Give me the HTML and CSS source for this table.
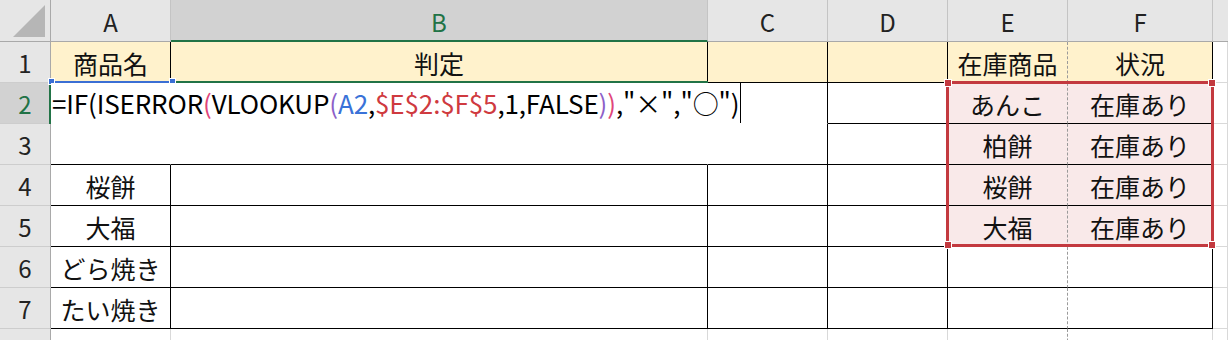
FILE: index.html
```html
<!DOCTYPE html>
<html lang="ja">
<head>
<meta charset="utf-8">
<link rel="stylesheet" href="styles.css">
</head>
<body>
<div class="sheet">
  <div class="grid">
    <div class="corner"><svg width="50" height="41" viewBox="0 0 50 41"><polygon points="45,5 45,37 13,37" fill="#b6b6b6"/></svg></div>
    <div class="ch">A</div>
    <div class="ch ch-sel">B</div>
    <div class="ch">C</div>
    <div class="ch">D</div>
    <div class="ch">E</div>
    <div class="ch">F</div>
    <div class="ch ch-last"></div>

    <div class="rh">1</div>
    <div class="c yel br">商品名</div>
    <div class="c yel br">判定</div>
    <div class="c yel br bb"></div>
    <div class="c yel br bb"></div>
    <div class="c yel dr bb">在庫商品</div>
    <div class="c yel br bb">状況</div>
    <div class="c"></div>

    <div class="rh rh-sel">2</div>
    <div class="c"></div>
    <div class="c"></div>
    <div class="c br"></div>
    <div class="c br bb"></div>
    <div class="c pink dr bb">あんこ</div>
    <div class="c pink br bb">在庫あり</div>
    <div class="c"></div>

    <div class="rh">3</div>
    <div class="c bb"></div>
    <div class="c bb"></div>
    <div class="c br bb"></div>
    <div class="c br bb"></div>
    <div class="c pink dr bb">柏餅</div>
    <div class="c pink br bb">在庫あり</div>
    <div class="c"></div>

    <div class="rh">4</div>
    <div class="c br bb">桜餅</div>
    <div class="c br bb"></div>
    <div class="c br bb"></div>
    <div class="c br bb"></div>
    <div class="c pink dr bb">桜餅</div>
    <div class="c pink br bb">在庫あり</div>
    <div class="c"></div>

    <div class="rh">5</div>
    <div class="c br bb">大福</div>
    <div class="c br bb"></div>
    <div class="c br bb"></div>
    <div class="c br bb"></div>
    <div class="c pink dr bb">大福</div>
    <div class="c pink br bb">在庫あり</div>
    <div class="c"></div>

    <div class="rh">6</div>
    <div class="c br bb">どら焼き</div>
    <div class="c br bb"></div>
    <div class="c br bb"></div>
    <div class="c br bb"></div>
    <div class="c dr bb"></div>
    <div class="c br bb"></div>
    <div class="c"></div>

    <div class="rh">7</div>
    <div class="c br bb">たい焼き</div>
    <div class="c br bb"></div>
    <div class="c br bb"></div>
    <div class="c br bb"></div>
    <div class="c dr bb"></div>
    <div class="c br bb"></div>
    <div class="c"></div>

    <div class="rh">8</div>
    <div class="c"></div>
    <div class="c"></div>
    <div class="c"></div>
    <div class="c"></div>
    <div class="c dr"></div>
    <div class="c"></div>
    <div class="c"></div>
  </div>

  <div class="green-top"></div>
  <div class="green-row"></div>
  <div class="ref-blue"><span class="h hl"></span><span class="h hr"></span></div>
  <div class="ref-red"><span class="q q1"></span><span class="q q2"></span><span class="q q3"></span><span class="q q4"></span></div>
  <div class="editor"><span class="f">=IF(ISERROR<span class="p2">(</span>VLOOKUP<span class="p3">(</span><span class="rb">A2</span>,<span class="rr">$E$2:$F$5</span>,1,FALSE<span class="p3">)</span><span class="p2">)</span>,"×","○")</span><span class="caret"></span></div>
</div>
</body>
</html>
```

FILE: styles.css
```css
* { box-sizing: border-box; }
html, body { margin: 0; padding: 0; background: #fff; }
body { width: 1228px; height: 340px; overflow: hidden; }

.sheet {
  position: relative;
  width: 1228px;
  height: 340px;
  overflow: hidden;
  font-family: "Noto Sans CJK JP", "Noto Sans", sans-serif;
  color: #111;
}

.grid {
  display: grid;
  grid-template-columns: 51px 120px 537px 120px 120px 120px 145px 1fr;
  grid-template-rows: 42px repeat(8, 41px);
}

.corner {
  background: #e6e6e6;
  border-right: 1px solid #a9a9a9;
  border-bottom: 1px solid #a9a9a9;
}
.corner svg { display: block; }

.ch {
  background: #e6e6e6;
  border-right: 1px solid #c4c4c4;
  border-bottom: 1px solid #a9a9a9;
  display: flex;
  align-items: center;
  justify-content: center;
  font-size: 24px;
  color: #222;
  padding-top: 2px;
}
.ch-sel {
  background: #d2d2d2;
  color: #217346;
  border-bottom: 2px solid #217346;
}
.ch-last { border-right: none; }

.rh {
  background: #e6e6e6;
  border-right: 1px solid #a9a9a9;
  border-bottom: 1px solid #cdcdcd;
  display: flex;
  align-items: center;
  justify-content: center;
  font-size: 24px;
  color: #222;
}
.rh-sel { background: #d2d2d2; color: #217346; }

.c {
  border-right: 1px solid #d9d9d9;
  border-bottom: 1px solid #d9d9d9;
  display: flex;
  align-items: center;
  justify-content: center;
  font-size: 25px;
  white-space: nowrap;
  padding-top: 1px;
}
.yel { background: #fff2cc; }
.pink { background: #f9e9e9; }
.c.br { border-right-color: #000; }
.c.bb { border-bottom-color: #000; }
.c.dr { border-right: 1px dashed #9a9a9a; }

.green-top {
  position: absolute;
  left: 170px;
  top: 81px;
  width: 538px;
  height: 2px;
  background: #217346;
}
.green-row {
  position: absolute;
  left: 49px;
  top: 82px;
  width: 2px;
  height: 42px;
  background: #217346;
}

.ref-blue {
  position: absolute;
  left: 51px;
  top: 81px;
  width: 121px;
  height: 2px;
  background: #3b6fd4;
}
.ref-blue .h {
  position: absolute;
  top: -2px;
  width: 5px;
  height: 5px;
  background: #3b6fd4;
  outline: 1px solid #fff;
}
.ref-blue .hl { left: -2px; }
.ref-blue .hr { right: -3px; }

.ref-red {
  position: absolute;
  left: 946px;
  top: 81px;
  width: 268px;
  height: 166px;
  border: 3px solid #c3393f;
}
.ref-red .q {
  position: absolute;
  width: 6px;
  height: 6px;
  background: #c3393f;
  outline: 1px solid #fff;
}
.ref-red .q1 { left: -4px; top: -4px; }
.ref-red .q2 { right: -4px; top: -4px; }
.ref-red .q3 { left: -4px; bottom: -4px; }
.ref-red .q4 { right: -4px; bottom: -4px; }

.editor {
  position: absolute;
  left: 51px;
  top: 83px;
  width: 776px;
  height: 81px;
  background: #fff;
  display: flex;
  align-items: flex-start;
  padding-left: 1px;
  font-size: 26px;
  letter-spacing: -0.13px;
  white-space: nowrap;
  color: #000;
}
.editor .f { line-height: 40px; }
.caret {
  display: block;
  width: 1px;
  height: 40px;
  margin-left: 1px;
  background: #000;
  margin-top: 0;
}
.p2 { color: #e0457a; }
.p3 { color: #8d5fc8; }
.rb { color: #3a72d8; }
.rr { color: #cf3a3f; }
```
